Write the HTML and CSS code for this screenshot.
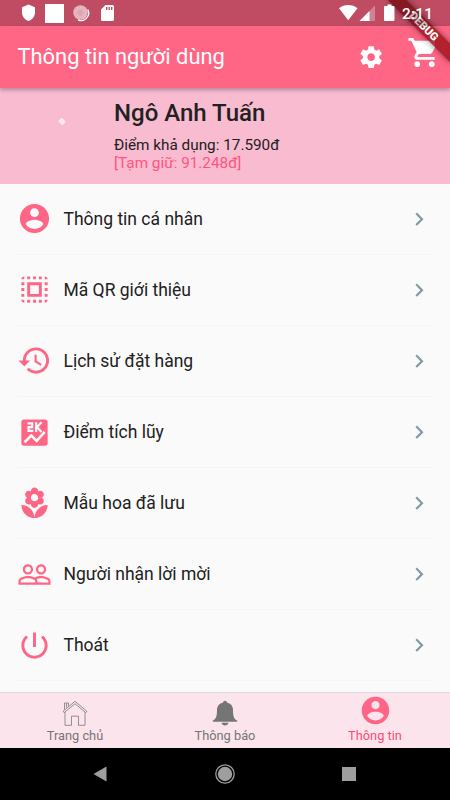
FILE: index.html
```html
<!DOCTYPE html>
<html lang="vi">
<head>
<meta charset="utf-8">
<title>Thông tin người dùng</title>
<link rel="stylesheet" href="styles.css">
</head>
<body>
<svg class="defs" aria-hidden="true">
  <symbol id="account" viewBox="0 0 24 24"><path d="M12 2C6.48 2 2 6.48 2 12s4.48 10 10 10 10-4.48 10-10S17.52 2 12 2zm0 3c1.66 0 3 1.34 3 3s-1.34 3-3 3-3-1.34-3-3 1.34-3 3-3zm0 14.2c-2.5 0-4.71-1.28-6-3.22.03-1.99 4-3.08 6-3.08 1.99 0 5.97 1.09 6 3.08-1.29 1.94-3.5 3.22-6 3.22z"/></symbol>
  <symbol id="chevron" viewBox="0 0 24 24"><path d="M10 6L8.590 7.410 13.170 12l-4.580 4.590L10 18l6-6z"/></symbol>
</svg>
<div class="screen">
  <div class="statusbar">
    <svg class="status-left" viewBox="0 0 120 26" fill="#fff">
      <path d="M28.500 4.500L35 7.200V12.500C35 16.500 32.300 19.700 28.500 21 24.700 19.700 22 16.500 22 12.500V7.200z"/>
      <path d="M45 4h19v19H45z"/>
      <circle cx="80.500" cy="12.500" r="7.300" opacity=".5"/>
      <circle cx="80.500" cy="12.500" r="5" fill="none" stroke="#fff" stroke-width="4" stroke-dasharray=".8 .8" opacity=".35"/>
      <path d="M87.800 9.500A7.500 7.500 0 0 1 78 19.800" fill="none" stroke="#fff" stroke-width="1.300"/>
      <path fill-rule="evenodd" d="M105.500 5H112.500Q114 5 114 6.500V19.500Q114 21 112.500 21H102.500Q101 21 101 19.500V9.500zM106 7V10H107.400V7zM108.500 7V10H109.900V7zM111 7V10H112.400V7z"/>
    </svg>
    <svg class="status-right" viewBox="0 0 64 26" fill="#fff">
      <path d="M0 8.300C5.500 3.900 13 3.900 18.500 8.300L9.250 20.300z"/>
      <path d="M36 5.500V21H20.500z" opacity=".3"/>
      <path d="M30.500 11V21H20.500z"/>
      <path d="M48.500 4.500h4v1.600H54.500q1 0 1 1V20q0 1-1 1h-8.500q-1 0-1-1V7.100q0-1 1-1H48.500z"/>
    </svg>
    <span class="clock">2:11</span>
  </div>
  <header class="appbar">
    <h1>Thông tin người dùng</h1>
    <svg class="gear" viewBox="0 0 24 24"><path d="M19.430 12.980c.04-.32.07-.64.07-.98s-.03-.66-.07-.98l2.110-1.650c.19-.15.24-.42.12-.64l-2-3.460c-.12-.22-.39-.3-.61-.22l-2.490 1c-.52-.4-1.080-.73-1.690-.98l-.38-2.650C14.460 2.180 14.250 2 14 2h-4c-.25 0-.46.18-.49.42l-.38 2.650c-.61.25-1.170.59-1.690.98l-2.490-1c-.23-.09-.49 0-.61.22l-2 3.460c-.13.22-.07.49.12.64l2.110 1.650c-.04.32-.07.65-.07.98s.03.66.07.98l-2.110 1.650c-.19.15-.24.42-.12.64l2 3.460c.12.22.39.3.61.22l2.490-1c.52.4 1.080.73 1.690.98l.38 2.650c.03.24.24.42.49.42h4c.25 0 .46-.18.49-.42l.38-2.650c.61-.25 1.170-.59 1.690-.98l2.490 1c.23.09.49 0 .61-.22l2-3.460c.12-.22.07-.49-.12-.64l-2.110-1.650zM12 15.500c-1.930 0-3.500-1.570-3.500-3.500s1.570-3.500 3.500-3.500 3.500 1.570 3.500 3.500-1.570 3.500-3.500 3.500z"/></svg>
    <svg class="cart" viewBox="0 0 19.200 24"><path d="M7 18c-1.100 0-1.990.9-1.990 2S5.900 22 7 22s2-.9 2-2-.9-2-2-2zM1 2v2h2l3.600 7.590-1.350 2.450c-.16.28-.25.61-.25.96 0 1.100.9 2 2 2h12v-2H7.420c-.14 0-.25-.11-.25-.25l.03-.12.9-1.630h7.450c.75 0 1.410-.41 1.750-1.030l3.580-6.490c.08-.14.12-.31.12-.48 0-.55-.45-1-1-1H5.210l-.94-2H1zm16 16c-1.100 0-1.990.9-1.990 2s.89 2 1.990 2 2-.9 2-2-.9-2-2-2z"/></svg>
  </header>
  <section class="profile">
    <div class="avatar"><i class="spark"></i></div>
    <div class="who">
      <h2>Ngô Anh Tuấn</h2>
      <p class="points">Điểm khả dụng: 17.590đ</p>
      <p class="held">[Tạm giữ: 91.248đ]</p>
    </div>
  </section>
  <main class="menu">
    <div class="row">
      <svg class="icon"><use href="#account"/></svg>
      <span class="label">Thông tin cá nhân</span><svg class="chev"><use href="#chevron"/></svg>
    </div>
    <div class="row">
      <svg class="icon" viewBox="0 0 24 24"><path d="M3 5h2V3c-1.100 0-2 .9-2 2zm0 8h2v-2H3v2zm4 8h2v-2H7v2zM3 9h2V7H3v2zm10-6h-2v2h2V3zm6 0v2h2c0-1.100-.9-2-2-2zM5 21v-2H3c0 1.100.9 2 2 2zm-2-4h2v-2H3v2zM9 3H7v2h2V3zm2 18h2v-2h-2v2zm8-8h2v-2h-2v2zm0 8c1.100 0 2-.9 2-2h-2v2zm0-12h2V7h-2v2zm0 8h2v-2h-2v2zm-4 4h2v-2h-2v2zm0-16h2V3h-2v2zM7 17h10V7H7v10zm2-8h6v6H9V9z"/></svg>
      <span class="label">Mã QR giới thiệu</span><svg class="chev"><use href="#chevron"/></svg>
    </div>
    <div class="row">
      <svg class="icon" viewBox="0 0 24 24"><path d="M13 3c-4.970 0-9 4.030-9 9H1l3.890 3.890.07.14L9 12H6c0-3.870 3.130-7 7-7s7 3.130 7 7-3.130 7-7 7c-1.930 0-3.680-.79-4.940-2.060l-1.420 1.420C8.270 19.990 10.510 21 13 21c4.970 0 9-4.030 9-9s-4.030-9-9-9zm-1 5v5l4.280 2.540.72-1.210-3.500-2.080V8H12z"/></svg>
      <span class="label">Lịch sử đặt hàng</span><svg class="chev"><use href="#chevron"/></svg>
    </div>
    <div class="row">
      <svg class="icon" viewBox="0 0 24 24"><rect x="3" y="3" width="18" height="18" rx="1.800"/><g fill="none" stroke="#fafafa"><path stroke-width="1.500" d="M7.200 5.750h3.200v2.500h-2.500v2.600h3.300M13.100 5v6.600M16.800 5l-3.100 3.300 3.100 3.300"/><path stroke-width="1.800" d="M5.200 18.700l4.600-4.600 3.700 3.700 5.500-6.200"/></g></svg>
      <span class="label">Điểm tích lũy</span><svg class="chev"><use href="#chevron"/></svg>
    </div>
    <div class="row">
      <svg class="icon" viewBox="0 0 24 24"><path d="M12 22c4.970 0 9-4.030 9-9-4.970 0-9 4.030-9 9zM5.600 10.250c0 1.380 1.120 2.500 2.500 2.500.53 0 1.010-.16 1.420-.44l-.02.19c0 1.380 1.120 2.500 2.500 2.500s2.500-1.120 2.500-2.500l-.02-.19c.4.28.89.44 1.420.44 1.380 0 2.500-1.120 2.500-2.500 0-1-.59-1.850-1.430-2.250.84-.4 1.430-1.250 1.430-2.250 0-1.380-1.120-2.500-2.500-2.500-.53 0-1.010.16-1.420.44l.02-.19C14.500 2.120 13.380 1 12 1S9.500 2.120 9.500 3.500l.02.19c-.4-.28-.89-.44-1.420-.44-1.380 0-2.500 1.120-2.500 2.500 0 1 .59 1.850 1.430 2.250-.84.4-1.430 1.250-1.430 2.250zM12 5.500c1.380 0 2.500 1.120 2.500 2.500s-1.120 2.500-2.500 2.500S9.500 9.380 9.500 8s1.120-2.500 2.500-2.500zM3 13c0 4.970 4.030 9 9 9 0-4.970-4.030-9-9-9z"/></svg>
      <span class="label">Mẫu hoa đã lưu</span><svg class="chev"><use href="#chevron"/></svg>
    </div>
    <div class="row">
      <svg class="icon" viewBox="0 0 24 24"><path d="M16.500 13c-1.200 0-3.070.34-4.500 1-1.430-.67-3.300-1-4.500-1C5.330 13 1 14.080 1 16.250V19h22v-2.750c0-2.170-4.330-3.250-6.500-3.250zm-4 4.500h-10v-1.250c0-.54 2.560-1.750 5-1.750s5 1.210 5 1.750v1.250zm9 0H14v-1.250c0-.46-.2-.86-.52-1.220.88-.3 1.960-.53 3.020-.53 2.440 0 5 1.210 5 1.750v1.250zM7.500 12c1.930 0 3.500-1.570 3.500-3.500S9.430 5 7.500 5 4 6.570 4 8.500 5.570 12 7.500 12zm0-5.500c1.100 0 2 .9 2 2s-.9 2-2 2-2-.9-2-2 .9-2 2-2zm9 5.500c1.930 0 3.500-1.570 3.500-3.500S18.430 5 16.500 5 13 6.570 13 8.500s1.570 3.500 3.500 3.500zm0-5.500c1.100 0 2 .9 2 2s-.9 2-2 2-2-.9-2-2 .9-2 2-2z"/></svg>
      <span class="label">Người nhận lời mời</span><svg class="chev"><use href="#chevron"/></svg>
    </div>
    <div class="row">
      <svg class="icon" viewBox="0 0 24 24"><path d="M13 3h-2v10h2V3zm4.830 2.170l-1.420 1.420C17.990 7.860 19 9.810 19 12c0 3.870-3.130 7-7 7s-7-3.130-7-7c0-2.190 1.010-4.140 2.580-5.420L6.170 5.170C4.230 6.820 3 9.260 3 12c0 4.970 4.030 9 9 9s9-4.030 9-9c0-2.740-1.230-5.180-3.170-6.830z"/></svg>
      <span class="label">Thoát</span><svg class="chev"><use href="#chevron"/></svg>
    </div>
  </main>
  <nav class="tabs">
    <div class="tab">
      <svg class="tab-icon" viewBox="0 0 26 26" fill="none" stroke="#777" stroke-width=".8"><path d="M1.200 11.200L13 1.300 24.800 11.200M2.200 12.700L13 3.700 23.800 12.700M1.200 11.200l1 1.500M24.800 11.200l-1 1.500M3 12.200V25.300H9.500V16.200H16.500V25.300H23V12.200M2.500 9.500V3H6.500V6.200M4.500 3.500V7.500"/></svg>
      <span>Trang chủ</span>
    </div>
    <div class="tab">
      <svg class="tab-icon" viewBox="0 0 26 26" fill="#757575"><path d="M13 .8C14.100.8 14.900 1.500 14.900 2.500 18.700 3.300 21 6.200 21 10 21 16.500 22 19 25.200 20.600V21.700H.8V20.600C4 19 5 16.500 5 10 5 6.200 7.300 3.300 11.100 2.500 11.100 1.500 11.900.8 13 .8zM9.500 22.700H16.500C16 24.500 14.700 25.500 13 25.500S10 24.500 9.500 22.700z"/></svg>
      <span>Thông báo</span>
    </div>
    <div class="tab active">
      <svg class="tab-icon large"><use href="#account"/></svg>
      <span>Thông tin</span>
    </div>
  </nav>
  <div class="sysnav">
    <svg viewBox="0 0 20 20"><path d="M2.500 10L15.500 2.500V17.500z"/></svg>
    <svg viewBox="0 0 20 20"><circle cx="10" cy="10" r="7.200"/><circle cx="10" cy="10" r="9.200" fill="none" stroke="#9e9e9e" stroke-width="1.300"/></svg>
    <svg viewBox="0 0 20 20"><path d="M3 3h14v14H3z"/></svg>
  </div>
  <div class="banner">DEBUG</div>
</div>
</body>
</html>
```
FILE: styles.css
```css
* { box-sizing: border-box; margin: 0; padding: 0; }
body { font-family: Roboto, sans-serif; color: #212121; }
svg { display: block; flex: none; }
.defs { position: absolute; width: 0; height: 0; }
.screen {
  position: relative;
  width: 450px;
  height: 800px;
  overflow: hidden;
  display: flex;
  flex-direction: column;
  background: linear-gradient(#ff6685 40px, #fafafa 40px);
}
/* The system bar tints whatever the app draws beneath it. */
.statusbar {
  position: relative;
  z-index: 3;
  height: 26px;
  flex: none;
  display: flex;
  align-items: center;
  background: rgba(0, 0, 0, .25);
  color: #fff;
}
.status-left { width: 120px; height: 26px; }
.status-right { width: 64px; height: 26px; margin-left: 219px; }
.clock { font-size: 15.300px; font-weight: 500; line-height: 26px; margin: 1px 0 0 -1px; letter-spacing: .3px; }
.appbar {
  position: relative;
  z-index: 1;
  height: 61.500px;
  flex: none;
  display: flex;
  align-items: center;
  padding-left: 17.500px;
  background: #ff6685;
  color: #fff;
  box-shadow: 0 2px 4px rgba(0, 0, 0, .28);
}
.appbar h1 { flex: 1; font-size: 21.900px; font-weight: 400; line-height: 30px; margin-top: 1px; }
.appbar svg { fill: #fff; }
.gear { width: 26.300px; height: 26.300px; margin-right: 22.400px; }
.cart { width: 28px; height: 35px; margin: -8px 15.500px 0 0; }
.profile { height: 96.100px; flex: none; display: flex; background: #f8bbd0; }
.avatar { width: 114px; padding: 31px 0 0 58.500px; }
.spark { display: block; width: 6px; height: 5px; border-radius: 1px; background: #fdeaf1; transform: rotate(42deg); }
.who { padding-top: 10px; }
.who h2 { font-size: 24px; font-weight: 500; line-height: 30px; margin-bottom: 9.500px; }
.who p { font-size: 15.300px; line-height: 17.500px; }
.who .held { color: #ff5580; }
.menu { flex: none; height: 508.400px; padding: 0 17.500px 0 17.300px; }
.row { height: 71.130px; display: flex; align-items: center; border-bottom: 1px solid #f5f5f5; }
.icon { width: 35px; height: 35px; fill: #ff6685; }
.label { flex: 1; margin-left: 11.200px; font-size: 17.500px; line-height: 24px; }
.chev { width: 26.300px; height: 26.300px; fill: #849ba5; }
.tabs {
  height: 56px;
  flex: none;
  display: flex;
  background: #fce4ec;
  border-top: 1px solid #d9d9dc;
  color: #757575;
}
.tab { flex: 1; display: flex; flex-direction: column; align-items: center; padding-top: 7px; font-size: 12.800px; line-height: 16px; }
.tab-icon { width: 26px; height: 26px; margin-bottom: 2px; }
.tab-icon.large { width: 33px; height: 33px; margin: -6px 0 1px; fill: #ff6685; }
.tab.active { color: #f84c7a; }
.sysnav { height: 52px; flex: none; display: flex; justify-content: center; gap: 104px; align-items: center; background: #000; }
.sysnav svg { width: 20px; height: 20px; fill: #9e9e9e; }
.banner {
  position: absolute;
  z-index: 2;
  left: 380px;
  top: 19.800px;
  width: 87.500px;
  height: 13.100px;
  background: rgba(165, 22, 30, .86);
  box-shadow: 0 0 6px rgba(0, 0, 0, .5);
  color: #fff;
  font-size: 11.200px;
  font-weight: 900;
  line-height: 13.500px;
  text-align: center;
  transform: rotate(45deg);
}
```
